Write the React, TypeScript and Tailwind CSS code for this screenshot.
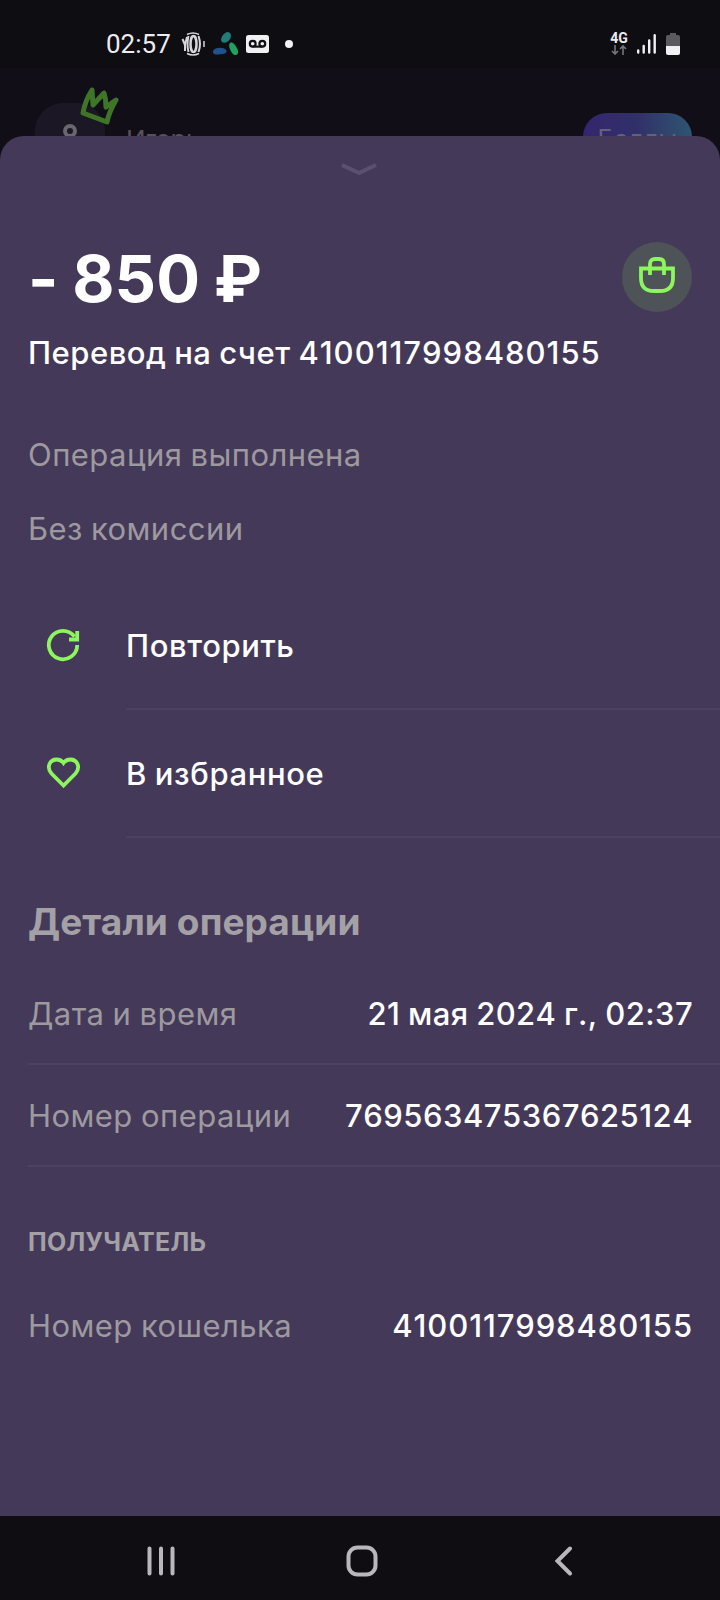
import type { ReactNode } from "react";

const ink = "font-medium text-[31px] [word-spacing:-1px] text-white";
const muted = "text-[31px] tracking-[0.45px] [word-spacing:-1px] text-[#9d9a9f]";

function StatusBar() {
    return (
        <div className="flex h-[68px] items-center justify-between bg-[#0e0d12] pt-5 pl-[106px] pr-10 text-[#ececf0]">
            <div className="flex items-center">
                <span className="w-[75px] font-[Roboto] text-[26px] leading-none">02:57</span>
                {/* Round news badge */}
                <svg className="h-6 w-6" viewBox="0 0 24 24" fill="none" stroke="#d6d6da">
                    <path d="M6 2.5Q12-.5 18 2.5M6 21.5Q12 24.5 18 21.5" strokeWidth="1.5" />
                    <path d="M1.5 7L4 13L6 5M4 13V19" strokeWidth="2" />
                    <ellipse cx="12.5" cy="12" rx="3" ry="8" strokeWidth="2.5" />
                    <path d="M7.5 4Q5.5 12 7.5 20M17.5 4Q20.5 12 17.5 20" strokeWidth="2" />
                    <path d="M23 9V15" strokeWidth="1.5" />
                </svg>
                {/* Three petals */}
                <svg className="ml-[8px] h-6 w-[26px]" viewBox="0 0 26 24">
                    <path d="M9 10C6 7 11 0 15 0C20 1 18 8 14 10C12 11 10 11 9 10Z" fill="#1f7f78" />
                    <path d="M0 19C2 15 11 15 13 18C15 21 11 22 8 22C4 23-1 23 0 19Z" fill="#22528a" />
                    <path d="M17 11C20 9 24 15 25 19C26 24 21 24 19 21C17 18 15 13 17 11Z" fill="#20a063" />
                </svg>
                {/* Voicemail */}
                <svg className="ml-[7px] h-[18px] w-[23px]" viewBox="0 0 23 18">
                    <rect width="23" height="18" rx="2.5" fill="#f1f1f3" />
                    <g fill="none" stroke="#101014" strokeWidth="2.2">
                        <circle cx="6.7" cy="8.7" r="2.9" />
                        <circle cx="16.3" cy="8.7" r="2.9" />
                        <path d="M6.7 11.6H16.3" />
                    </g>
                </svg>
                <span className="ml-4 h-2 w-2 rounded-full bg-[#f1f1f3]" />
            </div>
            <div className="flex items-center">
                <div className="mr-[-1px] flex h-[22px] w-4 flex-col items-center">
                    <span className="font-[Roboto] text-[14px] leading-[11px] font-bold">4G</span>
                    <svg className="mt-px h-[10px] w-4 shrink-0" viewBox="0 0 16 10" fill="none" stroke="#77777b" strokeWidth="1.6">
                        <path d="M4 0V9M1 6L4 9L7 6M12 10V1M9 4L12 1L15 4" />
                    </svg>
                </div>
                <svg className="ml-[11px] h-5 w-[19px]" viewBox="0 0 19 20" fill="none" stroke="#f1f1f3" strokeWidth="2.4" strokeLinecap="round">
                    <path d="M1.2 16.5V18.5M6.7 12V18.5M12.2 6.5V18.5M17.7 1.2V18.5" />
                </svg>
                <svg className="ml-[10px] h-[22px] w-[14px]" viewBox="0 0 14 22">
                    <path d="M4 0H10V2H12Q14 2 14 4V14H0V4Q0 2 2 2H4Z" fill="#5b5b5f" />
                    <path d="M0 13H14V20Q14 22 12 22H2Q0 22 0 20Z" fill="#f1f1f3" />
                </svg>
            </div>
        </div>
    );
}

function DimmedHeader() {
    return (
        <div className="relative flex h-[68px] items-start justify-between overflow-hidden bg-[#110e17] pl-[35px] pr-7">
            <div className="flex">
                <div className="mt-[35px] flex h-[70px] w-[70px] justify-center rounded-[28px] bg-[#1b1724] pt-[21px]">
                    <div className="h-[14px] w-[14px] rounded-full border-4 border-[#69666d]" />
                </div>
                <span className="mt-[56px] ml-[21px] text-[26px] leading-[32px] tracking-[-0.5px] text-[#56535a]">Игорь</span>
            </div>
            <div className="mt-[45px] flex h-14 w-[109px] justify-center rounded-[24px] bg-linear-to-r from-[#35256e] via-[#31306a] to-[#2d5570] pt-[10px] text-[25px] leading-[32px] tracking-[0.5px] text-[#65617b]">
                Баллы
            </div>
            <svg className="absolute top-[19px] left-[79px] h-[38px] w-[41px]" viewBox="0 0 41 38" fill="none" stroke="#3f7527" strokeWidth="5" strokeLinecap="round" strokeLinejoin="round">
                <path d="M13 3Q6 14 4 26L28 35Q30 25 37 13L27 20Q27 12 25 6L14 18Z" />
            </svg>
        </div>
    );
}

function Action({ icon, label }: { icon: ReactNode; label: string }) {
    return (
        <div className="flex h-32">
            <div className="flex w-[126px] items-center pl-[45px]">{icon}</div>
            <div className={`flex flex-1 items-center border-b-2 border-[#4d4261] pt-[2px] tracking-[0.6px] ${ink}`}>{label}</div>
        </div>
    );
}

interface DetailProps {
    label: string;
    value: string;
    valueClass?: string;
    line?: boolean;
}

function Detail({ label, value, valueClass = "tracking-[0.5px]", line = true }: DetailProps) {
    return (
        <div className={`ml-7 flex h-[102px] items-center justify-between pt-[2px] pr-[27px] ${line ? "border-b-2 border-[#4d4261]" : ""}`}>
            <span className={muted}>{label}</span>
            <span className={`[font-kerning:none] ${ink} ${valueClass}`}>{value}</span>
        </div>
    );
}

export default function App() {
    return (
        <div className="flex h-[1600px] w-[720px] flex-col overflow-hidden bg-[#110e17] font-[Inter,sans-serif] whitespace-nowrap">
            <StatusBar />
            <DimmedHeader />

            {/* Bottom sheet */}
            <main className="flex h-[1380px] flex-col rounded-t-[24px] bg-[#453959]">
                <svg className="mt-[27px] ml-[341px] h-3 w-9" viewBox="0 0 36 12" fill="none" stroke="#5b506f" strokeWidth="4">
                    <path d="M1 2L18 10L35 2" />
                </svg>
                <div className="mt-[66px] flex h-[72px] items-center justify-between px-7">
                    <h1 className="pt-[3px] text-[65px] leading-[72px] font-bold text-white [font-feature-settings:'calt'_0] [word-spacing:-1.5px]">- 850 ₽</h1>
                    <div className="flex h-[70px] w-[70px] items-center justify-center rounded-full bg-[#4e5358] pb-[4px]">
                        <svg className="h-9 w-9" viewBox="0 0 36 36" fill="none" stroke="#8cf65c" strokeWidth="3.8">
                            <path d="M2 11.5H34V21Q34 34 21 34H15Q2 34 2 21Z" />
                            <path d="M11 18V7Q11 2 16 2H20Q25 2 25 7V18" />
                        </svg>
                    </div>
                </div>
                <p className={`mt-[18px] px-7 leading-[44px] tracking-[0.5px] ${ink}`}>
                    Перевод на счет <span className="tracking-[1px] [font-kerning:none]">4100117998480155</span>
                </p>
                <p className={`mt-[58px] px-7 leading-[44px] ${muted}`}>Операция выполнена</p>
                <p className={`mt-[30px] px-7 leading-[44px] ${muted}`}>Без комиссии</p>

                <div className="mt-[31px]">
                    <Action
                        label="Повторить"
                        icon={
                            <svg className="mb-[2px] h-9 w-9" viewBox="0 0 36 36" fill="none" stroke="#8cf65c" strokeWidth="3.8">
                                <path d="M32.2 18A14.2 14.2 0 1 1 29.5 9.7" />
                                <path d="M32.2 4V12.5H24" />
                            </svg>
                        }
                    />
                    <Action
                        label="В избранное"
                        icon={
                            <svg className="mb-[2px] h-9 w-9" viewBox="0 0 36 36" fill="none" stroke="#8cf65c" strokeWidth="3.8">
                                <path d="M18.5 30.5L6.5 18.5C1 12 5 4.5 11.5 4.5Q16 4.5 18.5 8Q21 4.5 25.5 4.5C32 4.5 36 12 30.5 18.5Z" />
                            </svg>
                        }
                    />
                </div>

                <h2 className="mt-[60px] px-7 text-[37px] leading-[48px] font-bold tracking-[0.1px] text-[#a4a1a6]">Детали операции</h2>
                <div className="mt-[17px]">
                    <Detail label="Дата и время" value="21 мая 2024 г., 02:37" valueClass="tracking-[0.4px]" />
                    <Detail label="Номер операции" value="769563475367625124" />
                </div>
                <h3 className="mt-[59px] px-7 text-[25px] leading-8 font-bold tracking-[0.3px] text-[#a4a1a6]">ПОЛУЧАТЕЛЬ</h3>
                <div className="mt-[16px]">
                    <Detail label="Номер кошелька" value="4100117998480155" valueClass="tracking-[0.9px]" line={false} />
                </div>
            </main>

            {/* System navigation */}
            <nav className="flex h-[84px] items-center bg-[#0f0d12] pt-[6px] pl-[147px]">
                <svg className="h-[30px] w-7" viewBox="0 0 28 30" fill="none" stroke="#b9b7bc" strokeWidth="4" strokeLinecap="round">
                    <path d="M2.5 2.5V27.5M14 2.5V27.5M25.5 2.5V27.5" />
                </svg>
                <svg className="ml-[171px] h-8 w-8" viewBox="0 0 32 32" fill="none" stroke="#b9b7bc" strokeWidth="4">
                    <rect x="2.5" y="2.5" width="27" height="27" rx="9" />
                </svg>
                <svg className="ml-[176px] h-[30px] w-[18px]" viewBox="0 0 18 30" fill="none" stroke="#b9b7bc" strokeWidth="4" strokeLinecap="round">
                    <path d="M16 2.5L3.5 15L16 27.5" />
                </svg>
            </nav>
        </div>
    );
}
